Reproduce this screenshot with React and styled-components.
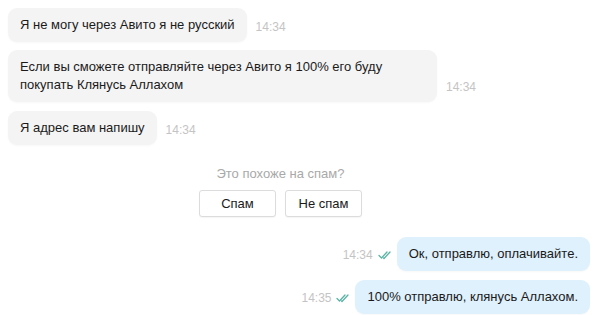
import React from "react";
import styled, { createGlobalStyle } from "styled-components";

const Global = createGlobalStyle`
  html, body { margin: 0; padding: 0; background: #fff; }
  body { font-family: "Liberation Sans", Arial, sans-serif; color: #1a1a1a; }
`;

const Chat = styled.div`
  width: 600px;
  height: 315px;
  box-sizing: border-box;
  padding: 8px 10px 0 8px;
  display: flex;
  flex-direction: column;
  overflow: hidden;
`;

const Row = styled.div`
  display: flex;
  align-items: ${(p) => (p.$out ? "center" : "flex-end")};
  justify-content: ${(p) => (p.$out ? "flex-end" : "flex-start")};
  margin-top: ${(p) => p.$mt || 0}px;
`;

const Bubble = styled.div`
  background: ${(p) => (p.$out ? "#dff1fc" : "#f4f4f4")};
  border-radius: 9px;
  padding: 8px 12px;
  font-size: 13px;
  line-height: 18px;
  color: #1a1a1a;
  max-width: ${(p) => p.$max || "none"};
  box-shadow: 0 1px 2px rgba(0, 0, 0, 0.03);
`;

const Time = styled.span`
  font-size: 12px;
  line-height: 14px;
  color: #c4c4c4;
  margin: 0 0 ${(p) => (p.$out ? "0" : "8px")} ${(p) => (p.$out ? "0" : "9px")};
  white-space: nowrap;
`;

const Meta = styled.div`
  display: flex;
  align-items: center;
  gap: 5px;
  margin: 2px 4px 0 0;
`;

const Spam = styled.div`
  display: flex;
  flex-direction: column;
  align-items: center;
  margin: 21px 37px 0 0;
`;

const SpamQ = styled.div`
  font-size: 13px;
  line-height: 15px;
  color: #a9a9a9;
`;

const Buttons = styled.div`
  display: flex;
  gap: 9px;
  margin-top: 9px;
`;

const Btn = styled.button`
  width: 77px;
  height: 27px;
  box-sizing: border-box;
  background: #fff;
  border: 1px solid #dcdcdc;
  border-radius: 3px;
  font-family: "Liberation Sans", Arial, sans-serif;
  font-size: 13px;
  color: #1a1a1a;
  padding: 0;
  box-shadow: 0 1px 1px rgba(0, 0, 0, 0.04);
`;

const Ticks = () => (
  <svg width="15" height="10" viewBox="0 0 15 10" fill="none" stroke="#5bb3a6" strokeWidth="1.3" strokeLinecap="round" strokeLinejoin="round">
    <path d="M1 5.5 L3.5 8 L9 2" />
    <path d="M5.5 8 L6 8.5 L12 2" />
  </svg>
);

export default function App() {
  return (
    <>
      <Global />
      <Chat>
        <Row>
          <Bubble>Я не могу через Авито я не русский</Bubble>
          <Time>14:34</Time>
        </Row>
        <Row $mt={8}>
          <Bubble $max="405px">
            Если вы сможете отправляйте через Авито я 100% его буду покупать Клянусь Аллахом
          </Bubble>
          <Time>14:34</Time>
        </Row>
        <Row $mt={9}>
          <Bubble>Я адрес вам напишу</Bubble>
          <Time>14:34</Time>
        </Row>
        <Spam>
          <SpamQ>Это похоже на спам?</SpamQ>
          <Buttons>
            <Btn>Спам</Btn>
            <Btn>Не спам</Btn>
          </Buttons>
        </Spam>
        <Row $out $mt={20}>
          <Meta>
            <Time $out>14:34</Time>
            <Ticks />
          </Meta>
          <Bubble $out>Ок, отправлю, оплачивайте.</Bubble>
        </Row>
        <Row $out $mt={9}>
          <Meta>
            <Time $out>14:35</Time>
            <Ticks />
          </Meta>
          <Bubble $out>100% отправлю, клянусь Аллахом.</Bubble>
        </Row>
      </Chat>
    </>
  );
}
